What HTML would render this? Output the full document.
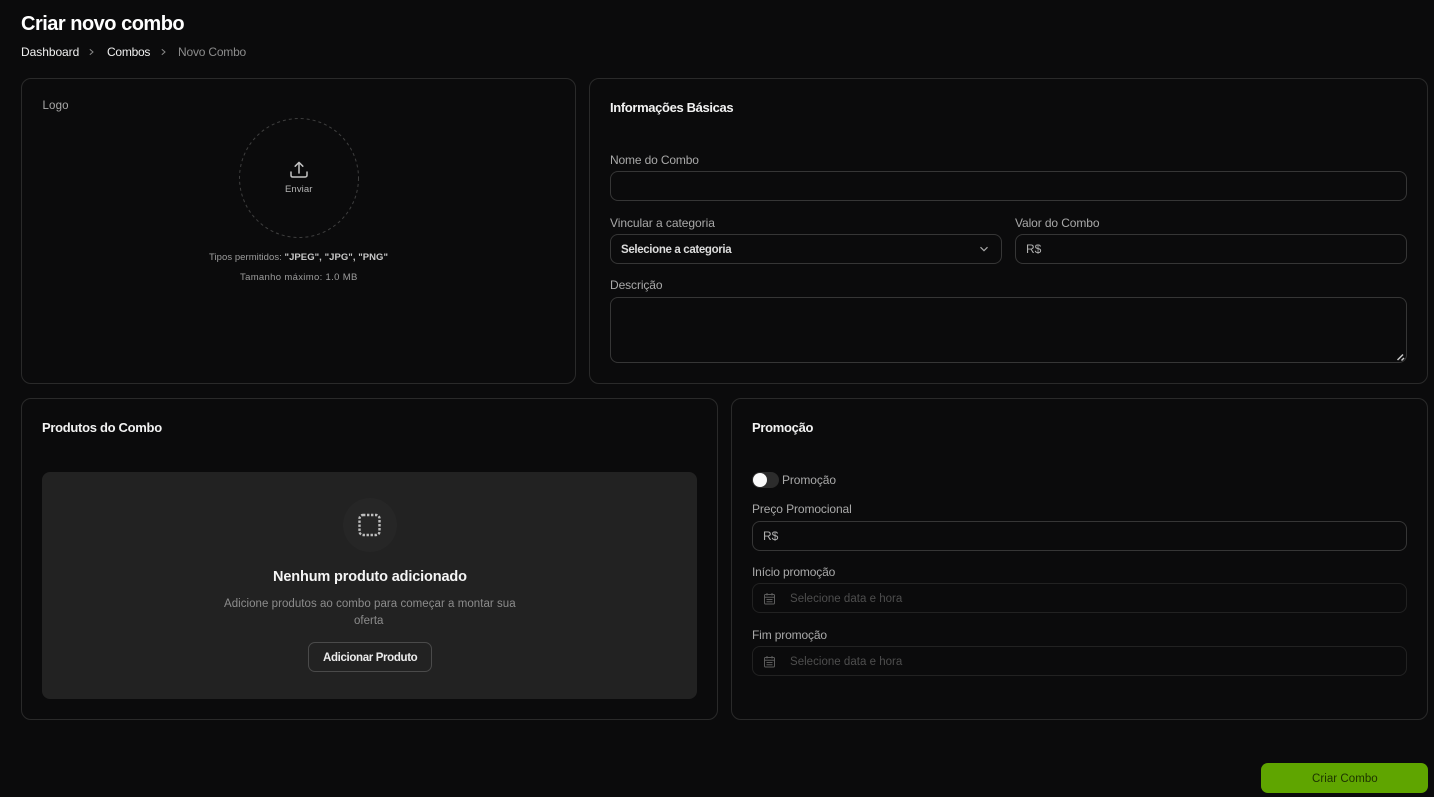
<!DOCTYPE html>
<html lang="pt-BR">
<head>
<meta charset="utf-8">
<title>Criar novo combo</title>
<style>
html,body{margin:0;padding:0;width:1434px;height:797px;overflow:hidden;background:#0b0b0c;}
body{position:relative;font-family:"Liberation Sans",sans-serif;color:#fff;}
.b{position:absolute;box-sizing:border-box;}
.card{border:1px solid #2a2a2a;border-radius:10px;background:#0b0b0c;}
.input{border:1px solid #363636;border-radius:8px;}
.dim{border-color:#222;}
.t{position:absolute;white-space:nowrap;line-height:1;}
.lab{font-size:12px;color:#a9a9a9;letter-spacing:-.1px;}
.h{font-size:13px;font-weight:bold;color:#f2f2f2;letter-spacing:-.3px;}
svg{position:absolute;}
</style>
</head>
<body>
<div class="t" style="left:21px;top:14px;font-size:20px;font-weight:bold;color:#fff;letter-spacing:-.5px;">Criar novo combo</div>
<div class="t" style="left:21px;top:46px;font-size:12px;color:#f0f0f0;letter-spacing:-.05px;">Dashboard</div>
<svg style="left:88px;top:48px" width="8" height="8" viewBox="0 0 8 8"><path d="M1.8 1.2L5 4L1.8 6.8" fill="none" stroke="#8a8a8a" stroke-width="1"/></svg>
<div class="t" style="left:107px;top:46px;font-size:12px;color:#f0f0f0;letter-spacing:-.25px;">Combos</div>
<svg style="left:160px;top:48px" width="8" height="8" viewBox="0 0 8 8"><path d="M1.8 1.2L5 4L1.8 6.8" fill="none" stroke="#8a8a8a" stroke-width="1"/></svg>
<div class="t" style="left:178px;top:46px;font-size:12px;color:#8c8c8c;letter-spacing:-.2px;">Novo Combo</div>

<div class="b card" style="left:21px;top:78px;width:555px;height:306px;"></div>
<div class="b card" style="left:589px;top:78px;width:839px;height:306px;"></div>
<div class="b card" style="left:21px;top:398px;width:697px;height:322px;"></div>
<div class="b card" style="left:731px;top:398px;width:697px;height:322px;"></div>

<div class="t lab" style="left:42.5px;top:101px;font-size:11.5px;letter-spacing:.15px;">Logo</div>
<svg style="left:238px;top:117px" width="122" height="122" viewBox="0 0 122 122"><circle cx="61" cy="61" r="59.5" fill="none" stroke="#3f3f3f" stroke-width="1" stroke-dasharray="3 3"/></svg>
<svg style="left:289px;top:160px" width="20" height="20" viewBox="0 0 20 20" fill="none" stroke="#c4c4c4" stroke-width="1.5" stroke-linecap="round" stroke-linejoin="round"><path d="M2 12v3.5A1.7 1.7 0 0 0 3.7 17h12.6a1.7 1.7 0 0 0 1.7-1.7V12"/><path d="M10 13V2.5M6.2 6.2L10 2.4l3.8 3.8"/></svg>
<div class="t" style="left:285px;top:184.5px;font-size:9.5px;color:#b5b5b5;letter-spacing:.1px;">Enviar</div>
<div class="t" style="left:209px;top:252.5px;font-size:9.5px;color:#9c9c9c;letter-spacing:.05px;">Tipos permitidos: <span style="font-weight:bold;color:#c8c8c8;">"JPEG", "JPG", "PNG"</span></div>
<div class="t" style="left:240px;top:272.5px;font-size:9.5px;color:#9c9c9c;letter-spacing:.33px;">Tamanho máximo: 1.0 MB</div>

<div class="t h" style="left:610px;top:101px;letter-spacing:-.36px;">Informações Básicas</div>
<div class="t lab" style="left:610px;top:154px;letter-spacing:-.15px;">Nome do Combo</div>
<div class="b input" style="left:610px;top:171px;width:797px;height:30px;"></div>
<div class="t lab" style="left:610px;top:217px;letter-spacing:-.05px;">Vincular a categoria</div>
<div class="b input" style="left:610px;top:234px;width:392px;height:30px;"></div>
<div class="t" style="left:621px;top:245px;font-size:11.5px;font-weight:bold;color:#dcdcdc;letter-spacing:-.35px;">Selecione a categoria</div>
<svg style="left:979px;top:244px" width="10" height="10" viewBox="0 0 10 10"><path d="M1.5 3.2L5 6.7L8.5 3.2" fill="none" stroke="#a8a8a8" stroke-width="1.2"/></svg>
<div class="t lab" style="left:1015px;top:217px;">Valor do Combo</div>
<div class="b input" style="left:1015px;top:234px;width:392px;height:30px;"></div>
<div class="t" style="left:1026px;top:243px;font-size:12px;color:#b0b0b0;">R$</div>
<div class="t lab" style="left:610px;top:279px;">Descrição</div>
<div class="b input" style="left:610px;top:297px;width:797px;height:66px;"></div>
<svg style="left:1396px;top:352px" width="10" height="10" viewBox="0 0 10 10"><path d="M1.5 8L7 2.5M5.5 8.5L8 6" fill="none" stroke="#c8c8c8" stroke-width="1.5"/></svg>

<div class="t h" style="left:42px;top:421px;">Produtos do Combo</div>
<div class="b" style="left:42px;top:472px;width:655px;height:227px;background:#222222;border-radius:8px;"></div>
<div class="b" style="left:343px;top:498px;width:54px;height:54px;border-radius:50%;background:#262626;"></div>
<svg style="left:357px;top:513px" width="24" height="24" viewBox="0 0 24 24"><rect x="2.5" y="2" width="20" height="20" rx="3.5" fill="none" stroke="#bdbdbd" stroke-width="2.4" stroke-dasharray="2.4 1.6"/></svg>
<div class="t" style="left:273px;top:570px;font-size:14.5px;font-weight:bold;color:#f5f5f5;letter-spacing:-.14px;">Nenhum produto adicionado</div>
<div class="t" style="left:224px;top:599px;font-size:11.5px;color:#8c8c8c;letter-spacing:.04px;">Adicione produtos ao combo para começar a montar sua</div>
<div class="t" style="left:354px;top:616px;font-size:11.5px;color:#8c8c8c;">oferta</div>
<div class="b" style="left:308px;top:642px;width:124px;height:30px;border:1px solid #4a4a4a;border-radius:7px;background:#222;"></div>
<div class="t" style="left:323px;top:653px;font-size:11.5px;font-weight:bold;color:#ececec;letter-spacing:-.35px;">Adicionar Produto</div>

<div class="t h" style="left:752px;top:421px;">Promoção</div>
<div class="b" style="left:752px;top:472px;width:27px;height:16px;border-radius:8px;background:#2c2c2c;"></div>
<div class="b" style="left:753px;top:473px;width:14px;height:14px;border-radius:50%;background:#fafafa;"></div>
<div class="t lab" style="left:782px;top:474px;">Promoção</div>
<div class="t lab" style="left:752px;top:503px;">Preço Promocional</div>
<div class="b input" style="left:752px;top:521px;width:655px;height:30px;"></div>
<div class="t" style="left:763px;top:530px;font-size:12px;color:#b0b0b0;">R$</div>
<div class="t lab" style="left:752px;top:566px;letter-spacing:-.15px;">Início promoção</div>
<div class="b input dim" style="left:752px;top:583px;width:655px;height:30px;"></div>
<svg style="left:763px;top:592px" width="13" height="13" viewBox="0 0 13 13" fill="none" stroke="#5c5c5c" stroke-width="1"><rect x="1.5" y="2.5" width="10" height="9.5" rx="1"/><path d="M1.5 5.2h10M4 1v2.5M9 1v2.5M3.5 7.5h6M3.5 9.8h6"/></svg>
<div class="t" style="left:790px;top:593.5px;font-size:11.5px;color:#4e4e4e;letter-spacing:.02px;">Selecione data e hora</div>
<div class="t lab" style="left:752px;top:629px;letter-spacing:-.15px;">Fim promoção</div>
<div class="b input dim" style="left:752px;top:646px;width:655px;height:30px;"></div>
<svg style="left:763px;top:655px" width="13" height="13" viewBox="0 0 13 13" fill="none" stroke="#5c5c5c" stroke-width="1"><rect x="1.5" y="2.5" width="10" height="9.5" rx="1"/><path d="M1.5 5.2h10M4 1v2.5M9 1v2.5M3.5 7.5h6M3.5 9.8h6"/></svg>
<div class="t" style="left:790px;top:656.5px;font-size:11.5px;color:#4e4e4e;letter-spacing:.02px;">Selecione data e hora</div>

<div class="b" style="left:1261px;top:763px;width:167px;height:30px;border-radius:7px;background:#5fa500;"></div>
<div class="t" style="left:1312px;top:773.5px;font-size:11.5px;color:#1d3300;letter-spacing:.05px;">Criar Combo</div>
</body>
</html>
